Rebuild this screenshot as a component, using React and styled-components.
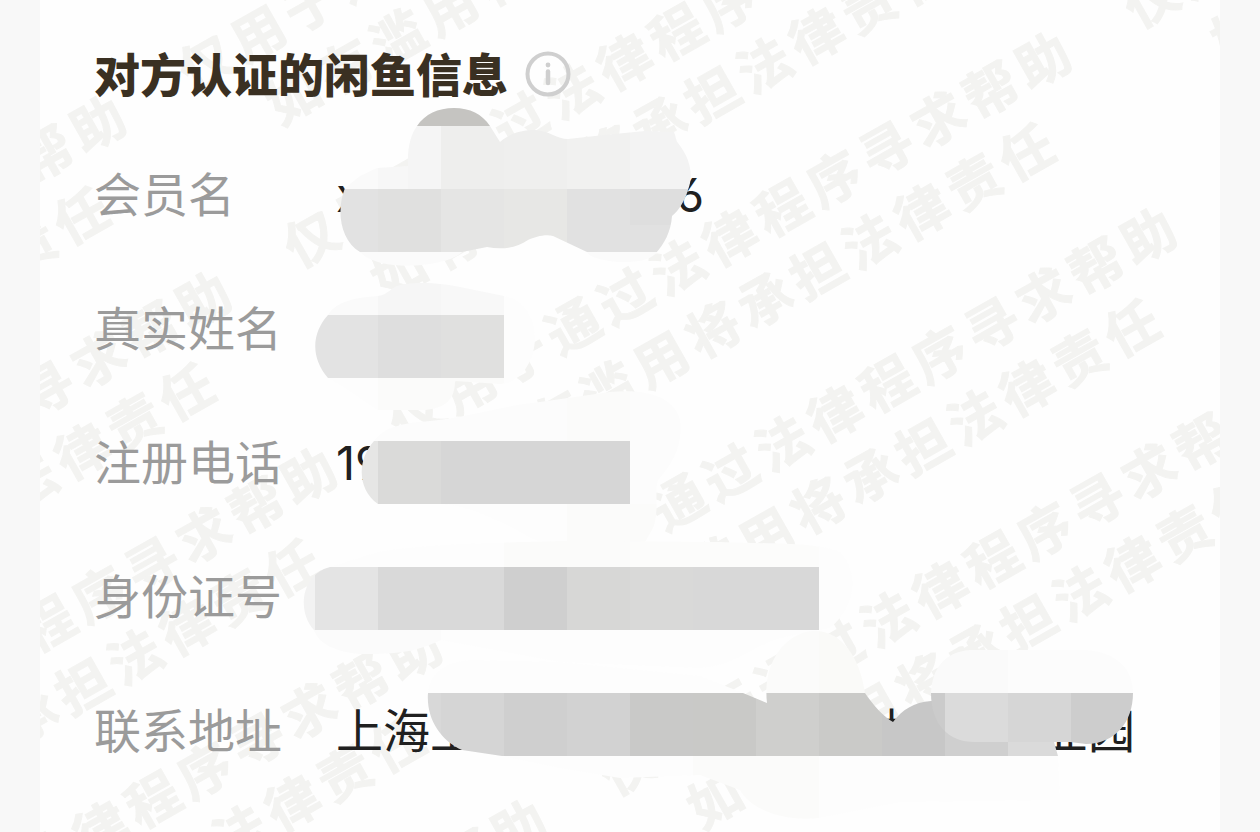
import React from 'react';
import styled, { createGlobalStyle } from 'styled-components';

const GlobalStyle = createGlobalStyle`
  * {
    box-sizing: border-box;
  }

  body {
    margin: 0;
    background: #f8f8f8;
    font-family: Inter, 'Noto Sans CJK SC', sans-serif;
    font-feature-settings: 'ss01';
  }
`;

const Page = styled.div`
  position: relative;
  min-height: 100vh;
  padding: 0 40px;
  overflow: hidden;
`;

const Card = styled.main`
  position: relative;
  min-height: 100vh;
  padding: 20px 54px 0;
  overflow: hidden;
  background: #fefefe;
`;

const WatermarkLayer = styled.div`
  position: absolute;
  top: 440px;
  left: 814px;
  display: grid;
  grid-template-columns: repeat(3, 844px);
  grid-template-rows: repeat(9, 205px);
  transform: translate(-50%, -50%) rotate(-29.5deg);
  pointer-events: none;
  user-select: none;
`;

// 每行水印沿文字方向错开 5px
const WatermarkText = styled.p`
  grid-row: ${({ $row }) => $row};
  grid-column: ${({ $column }) => $column};
  align-self: center;
  margin: 0;
  color: #f3f3f1;
  font-family: 'Noto Sans CJK SC', sans-serif;
  font-size: 53px;
  font-weight: 700;
  letter-spacing: 7px;
  line-height: 72px;
  text-align: center;
  white-space: nowrap;
  transform: translateX(${({ $row }) => ($row - 5) * 5}px);
  -webkit-text-stroke: 1px #f3f3f1;
`;

const Content = styled.div`
  position: relative;
`;

const Header = styled.header`
  display: flex;
  align-items: center;
  gap: 17px;
  height: 108px;
`;

const Title = styled.h1`
  margin: 0;
  padding-bottom: 4px;
  color: #3a3022;
  font-family: 'Noto Sans CJK SC', sans-serif;
  font-size: 46px;
  font-weight: 900;
  line-height: 48px;
  white-space: nowrap;
`;

const InfoButton = styled.button`
  display: flex;
  padding: 0;
  border: 0;
  background: none;
  cursor: pointer;
`;

const InfoList = styled.dl`
  margin: 0;
`;

const InfoRow = styled.div`
  display: flex;
  align-items: center;
  height: 134px;
  font-size: 47px;
  line-height: 48px;
  white-space: nowrap;
`;

const Label = styled.dt`
  flex: none;
  width: 242px;
  color: #9b9b9b;
`;

const Value = styled.dd`
  display: flex;
  margin: 0;
  color: #202020;
`;

const Masked = styled.span`
  width: ${({ $width }) => $width}px;
`;

const MosaicLayer = styled.svg`
  position: absolute;
  top: 0;
  left: 0;
  pointer-events: none;
`;

// 信息列表，数字表示被遮挡部分的宽度
const rows = [
  { label: '会员名', value: ['x', 315, '6'] },
  { label: '真实姓名', value: [] },
  { label: '注册电话', value: ['19'] },
  { label: '身份证号', value: [] },
  { label: '联系地址', value: ['上海上', 376, '村', 141, '业园'] },
];

// 水印所在的 [行, 列]
const watermarks = [
  [2, 1], [3, 1], [4, 1], [5, 1], [6, 1],
  [2, 2], [3, 2], [4, 2], [5, 2], [6, 2],
  [4, 3],
];

// 马赛克涂抹: d 为笔迹轮廓，cells 为 [x, y, 宽, 高, 颜色]
const smudges = [
  {
    id: 'name',
    d: 'M345 188 L360 176 L377 168 L408 166 C407 148 411 134 417 126 C425 114 438 108 454 108 C470 108 482 114 490 126 L500 142 C510 133 522 130 535 130 C550 131 557 139 568 139 L604 135 L645 131 L674 132 C676 137 676 141 678 143 C690 158 694 175 688 190 C684 203 678 211 672 216 C671 232 664 244 656 253 C645 268 590 262 587 252 L553 236 C545 234 535 237 528 240 C517 248 502 250 487 247 L462 252 C450 266 380 274 360 252 C340 240 336 210 345 188 Z',
    cells: [
      [330, 100, 180, 26, '#c5c4c1'],
      [330, 126, 48, 63, '#fafafa'],
      [378, 126, 30, 63, '#f7f7f7'],
      [408, 126, 33, 63, '#f5f5f5'],
      [441, 126, 63, 63, '#eeeeed'],
      [504, 126, 63, 63, '#efefee'],
      [567, 126, 63, 63, '#f1f1f0'],
      [630, 126, 70, 63, '#f3f3f3'],
      [330, 189, 48, 63, '#e2e2e2'],
      [378, 189, 63, 63, '#e0e0df'],
      [441, 189, 63, 63, '#e5e5e4'],
      [504, 189, 63, 63, '#e7e7e5'],
      [567, 189, 63, 63, '#e1e1e1'],
      [630, 189, 70, 36, '#dedede'],
      [630, 225, 70, 27, '#e1e1e1'],
      [330, 252, 360, 30, '#fbfbfb'],
    ],
  },
  {
    id: 'real-name',
    d: 'M328 315 C335 304 348 298 378 296 C388 295 391 287 400 285 C420 281 445 284 460 287 L504 296 C528 300 538 325 534 348 C531 366 518 383 500 384 L455 381 C455 400 445 408 425 410 L378 410 L340 385 L328 378 C311 358 311 334 328 315 Z',
    cells: [
      [310, 280, 68, 35, '#fafafa'],
      [378, 280, 63, 35, '#f6f6f6'],
      [441, 280, 63, 35, '#f8f8f8'],
      [504, 280, 40, 110, '#fdfdfd'],
      [310, 315, 68, 63, '#e3e3e3'],
      [378, 315, 63, 63, '#dedede'],
      [441, 315, 63, 63, '#e0e0df'],
      [310, 378, 68, 35, '#fdfdfd'],
      [378, 378, 126, 35, '#fbfbfa'],
    ],
  },
  {
    id: 'phone',
    d: 'M374 441 C385 426 405 423 430 421 C470 417 500 406 540 402 L610 392 C650 388 675 399 680 420 C683 446 673 463 658 480 C654 492 660 515 652 530 L645 542 L545 545 C515 530 475 505 440 504 L378 504 C357 489 357 460 374 441 Z',
    cells: [
      [355, 385, 212, 56, '#fcfcfc'],
      [567, 385, 63, 56, '#fbfbfa'],
      [630, 385, 60, 119, '#fcfcfc'],
      [355, 441, 23, 63, '#e6e6e5'],
      [378, 441, 63, 63, '#dadad9'],
      [441, 441, 189, 63, '#d6d6d6'],
      [440, 504, 127, 50, '#fdfdfd'],
      [567, 504, 100, 50, '#fbfbfa'],
    ],
  },
  {
    id: 'id-number',
    d: 'M330 567 L378 552 C430 543 500 543 560 541 L720 542 C770 544 815 542 840 552 C858 570 858 605 830 628 L800 634 C755 640 740 666 700 668 L560 662 L441 640 C415 652 400 654 360 654 C335 652 318 643 314 630 C296 610 302 574 330 567 Z',
    cells: [
      [300, 535, 204, 32, '#fdfdfd'],
      [504, 535, 126, 32, '#fbfbfa'],
      [630, 535, 189, 32, '#fcfcfb'],
      [819, 535, 40, 100, '#fdfdfd'],
      [300, 567, 15, 63, '#f2f2f2'],
      [315, 567, 63, 63, '#e4e4e4'],
      [378, 567, 126, 63, '#d9d9d9'],
      [504, 567, 63, 63, '#cfcfcf'],
      [567, 567, 63, 63, '#d7d7d6'],
      [630, 567, 63, 63, '#d9d9d8'],
      [693, 567, 126, 63, '#d8d8d8'],
      [300, 630, 141, 40, '#fbfbfb'],
      [441, 630, 378, 40, '#fdfdfd'],
    ],
  },
  {
    id: 'address',
    d: 'M428 693 C431 675 440 663 470 660 L560 662 L700 676 L743 693 L767 703 C762 660 788 631 815 631 C842 631 860 658 865 693 C872 704 885 718 893 722 C902 710 914 702 931 701 L1020 700 L1054 742 L1058 756 L1060 800 L900 802 L819 818 C780 822 750 808 740 790 L700 775 L620 778 L560 768 L502 756 L462 750 C440 740 426 718 428 693 Z',
    cells: [
      [420, 655, 336, 38, '#fdfdfd'],
      [756, 625, 63, 68, '#fbfbfa'],
      [819, 625, 63, 68, '#fafaf8'],
      [420, 693, 21, 63, '#d8d8d8'],
      [441, 693, 63, 63, '#d5d5d5'],
      [504, 693, 63, 63, '#cfcfcf'],
      [567, 693, 63, 63, '#d2d2d2'],
      [630, 693, 63, 63, '#c9c9c8'],
      [693, 693, 63, 63, '#c9c9c7'],
      [756, 693, 63, 63, '#cfcfcd'],
      [819, 693, 63, 63, '#cacac8'],
      [882, 693, 63, 63, '#c7c7c7'],
      [945, 693, 63, 63, '#cfcfcf'],
      [1008, 693, 52, 63, '#dadada'],
      [500, 756, 193, 64, '#fdfdfd'],
      [693, 756, 126, 64, '#fbfbfa'],
      [819, 756, 245, 64, '#fdfdfd'],
    ],
  },
  {
    id: 'address-end',
    d: 'M931 693 C932 668 945 652 970 650 L1085 650 C1118 652 1133 670 1133 693 C1133 722 1115 744 1086 744 L1070 742 L975 742 C948 742 931 724 931 693 Z',
    cells: [
      [925, 645, 83, 48, '#fafafa'],
      [1008, 645, 130, 48, '#fcfcfc'],
      [925, 693, 20, 55, '#cbcbcb'],
      [945, 693, 63, 55, '#dbdbdb'],
      [1008, 693, 63, 55, '#d6d6d6'],
      [1071, 693, 66, 55, '#cdcdcd'],
    ],
  },
];

const InfoIcon = () => (
  <svg width="46" height="46" viewBox="0 0 46 46" fill="none">
    <circle cx="23" cy="23" r="20.5" stroke="#cfcfcf" strokeWidth="4" />
    <circle cx="23" cy="14" r="2.4" fill="#cfcfcf" />
    <path d="M23 20.5V32" stroke="#cfcfcf" strokeWidth="4.5" strokeLinecap="round" />
  </svg>
);

const Watermark = () => (
  <WatermarkLayer aria-hidden="true">
    {watermarks.map(([row, column]) => (
      <WatermarkText key={`${row}-${column}`} $row={row} $column={column}>
        仅用于通过法律程序寻求帮助
        <br />
        如有滥用将承担法律责任
      </WatermarkText>
    ))}
  </WatermarkLayer>
);

const Mosaic = () => (
  <MosaicLayer width="1260" height="832" viewBox="0 0 1260 832" aria-hidden="true">
    {smudges.map(({ id, d, cells }) => (
      <g key={id} clipPath={`url(#${id})`}>
        <clipPath id={id}>
          <path d={d} />
        </clipPath>
        {cells.map(([x, y, width, height, fill]) => (
          <rect
            key={`${x}-${y}`}
            x={x}
            y={y}
            width={width}
            height={height}
            fill={fill}
            shapeRendering="crispEdges"
          />
        ))}
      </g>
    ))}
  </MosaicLayer>
);

const App = () => (
  <Page>
    <GlobalStyle />
    <Card>
      <Watermark />
      <Content>
        <Header>
          <Title>对方认证的闲鱼信息</Title>
          <InfoButton type="button" aria-label="说明">
            <InfoIcon />
          </InfoButton>
        </Header>
        <InfoList>
          {rows.map(({ label, value }) => (
            <InfoRow key={label}>
              <Label>{label}</Label>
              <Value>
                {value.map((part) =>
                  typeof part === 'number' ? (
                    <Masked key={part} $width={part} />
                  ) : (
                    <span key={part}>{part}</span>
                  )
                )}
              </Value>
            </InfoRow>
          ))}
        </InfoList>
      </Content>
    </Card>
    <Mosaic />
  </Page>
);

export default App;
